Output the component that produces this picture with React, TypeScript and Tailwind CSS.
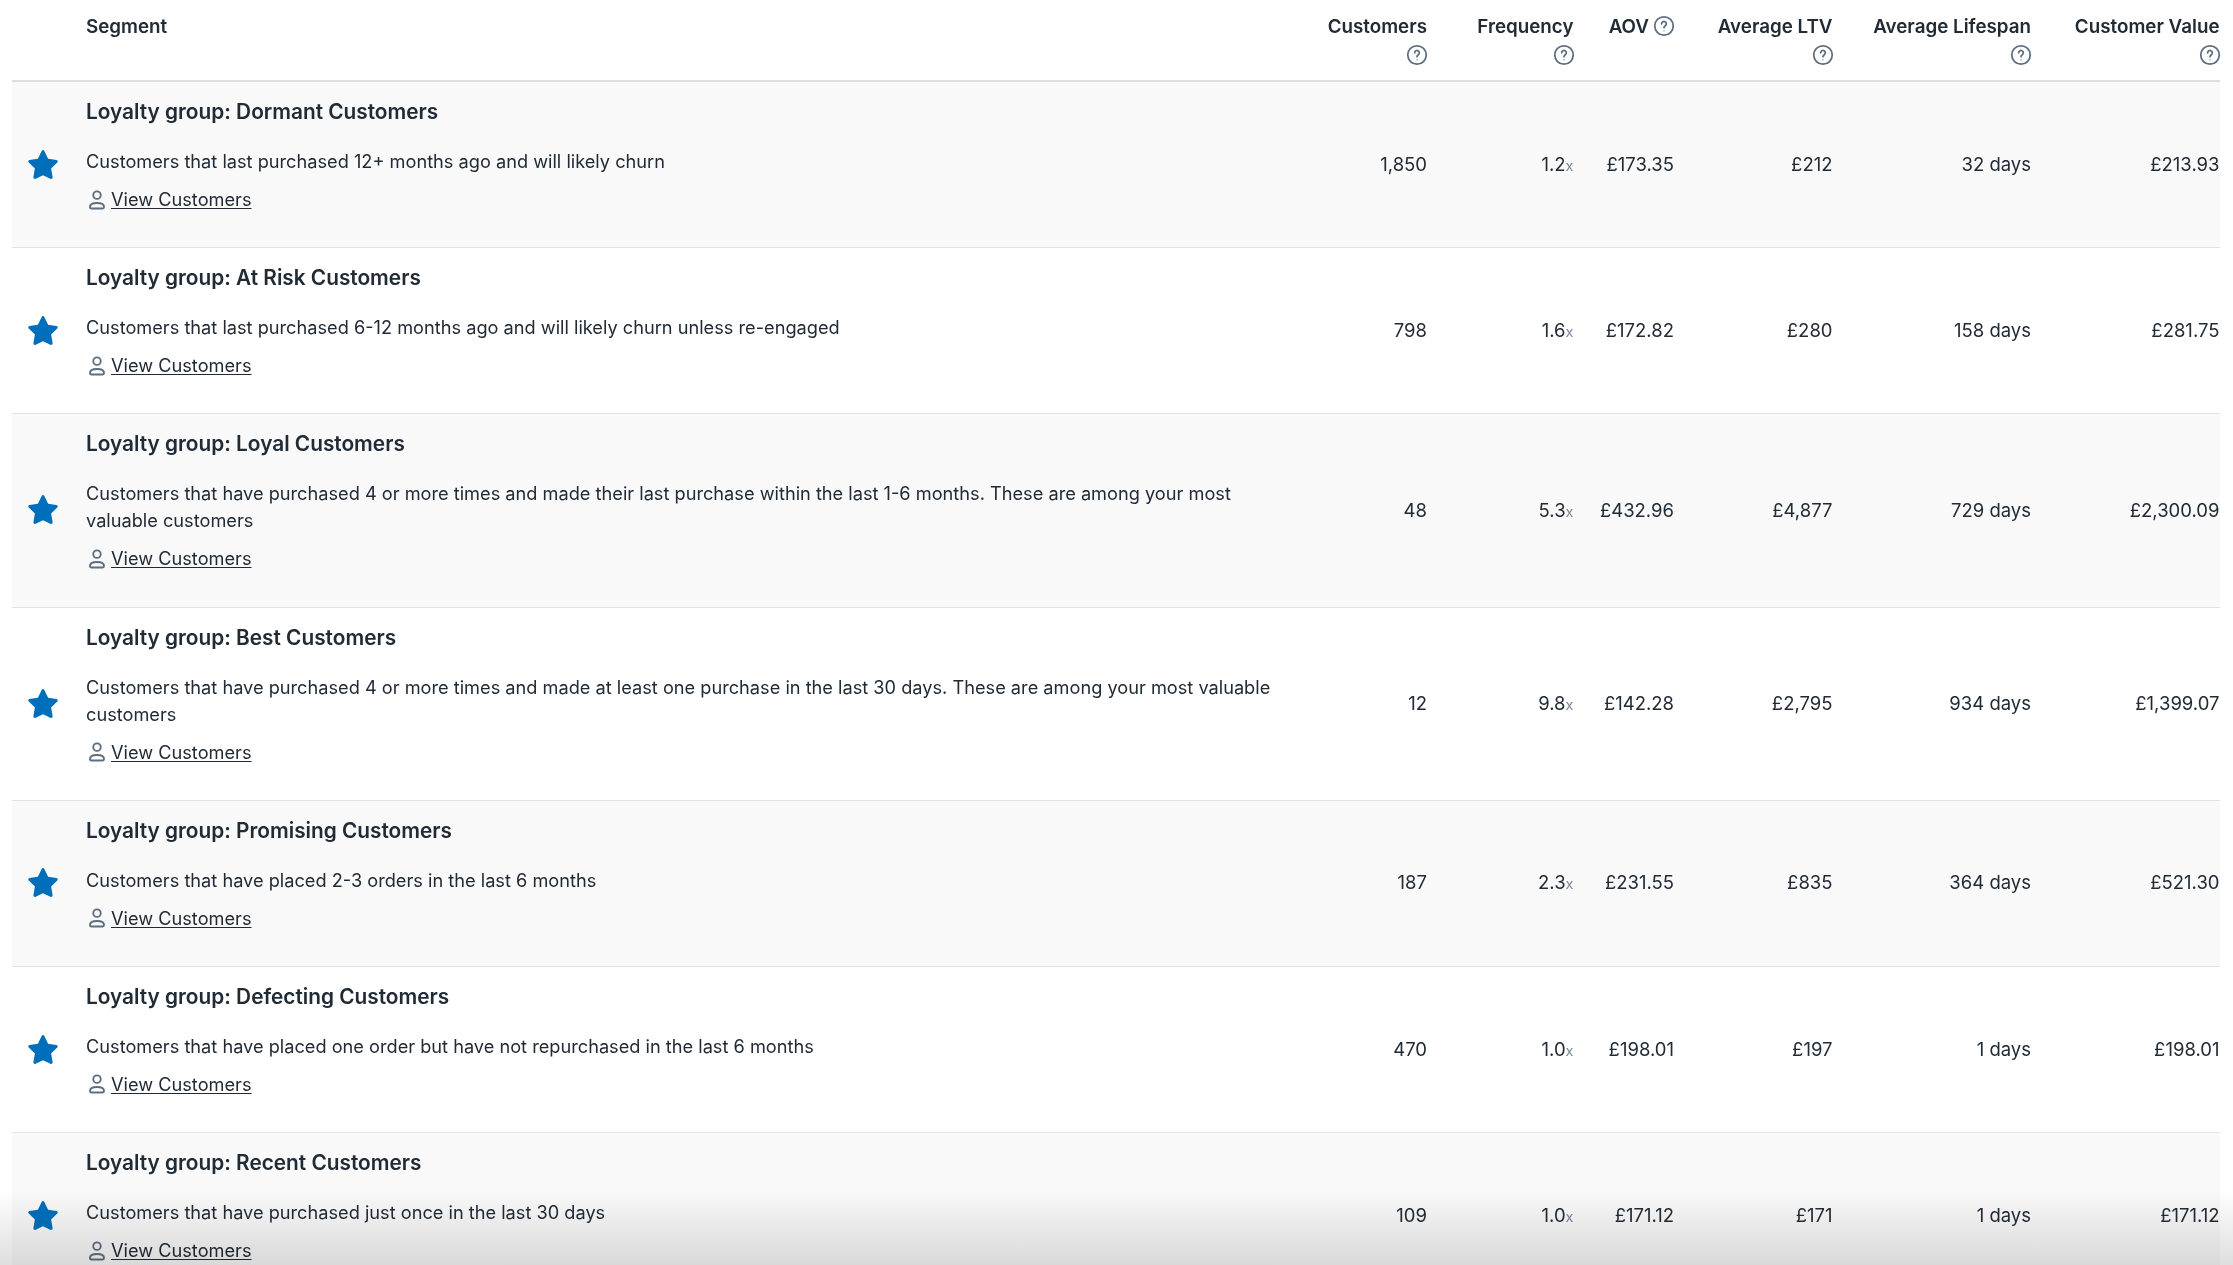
const rows = [
  { name: "Dormant Customers", desc: "Customers that last purchased 12+ months ago and will likely churn", customers: "1,850", freq: "1.2", aov: "£173.35", ltv: "£212", life: "32 days", value: "£213.93", tinted: true },
  { name: "At Risk Customers", desc: "Customers that last purchased 6-12 months ago and will likely churn unless re-engaged", customers: "798", freq: "1.6", aov: "£172.82", ltv: "£280", life: "158 days", value: "£281.75", tinted: false },
  { name: "Loyal Customers", desc: "Customers that have purchased 4 or more times and made their last purchase within the last 1-6 months. These are among your most valuable customers", customers: "48", freq: "5.3", aov: "£432.96", ltv: "£4,877", life: "729 days", value: "£2,300.09", tinted: true },
  { name: "Best Customers", desc: "Customers that have purchased 4 or more times and made at least one purchase in the last 30 days. These are among your most valuable customers", customers: "12", freq: "9.8", aov: "£142.28", ltv: "£2,795", life: "934 days", value: "£1,399.07", tinted: false },
  { name: "Promising Customers", desc: "Customers that have placed 2-3 orders in the last 6 months", customers: "187", freq: "2.3", aov: "£231.55", ltv: "£835", life: "364 days", value: "£521.30", tinted: true },
  { name: "Defecting Customers", desc: "Customers that have placed one order but have not repurchased in the last 6 months", customers: "470", freq: "1.0", aov: "£198.01", ltv: "£197", life: "1 days", value: "£198.01", tinted: false },
  { name: "Recent Customers", desc: "Customers that have purchased just once in the last 30 days", customers: "109", freq: "1.0", aov: "£171.12", ltv: "£171", life: "1 days", value: "£171.12", tinted: true },
];

const Help = () => (
  <svg viewBox="0 0 20 20" className="-mr-px inline-block h-[22px] w-[22px] text-[#5c6f82]" fill="none" stroke="currentColor" strokeWidth="1.6" strokeLinecap="round">
    <circle cx="10" cy="10" r="8.4" />
    <path d="M7.9 8a2.1 2.1 0 1 1 3.3 1.7c-.7.5-1.2.9-1.2 1.8" />
    <circle cx="10" cy="14.4" r=".6" fill="currentColor" stroke="none" />
  </svg>
);

const Star = () => (
  <svg viewBox="0 0 20 20" className="-mt-[2px] h-[30px] w-[30px] text-[#006fbb]" fill="currentColor">
    <path d="M10 .7c.4 0 .7.2.9.6l2.5 5.2 5.6.8c.8.1 1.1 1.1.5 1.7l-4.1 4 1 5.7c.1.9-.8 1.5-1.5 1.1L10 17.5l-4.9 2.3c-.7.4-1.6-.2-1.5-1.1l1-5.7-4.1-4c-.6-.6-.3-1.6.5-1.7l5.6-.8 2.5-5.2c.2-.4.5-.6.9-.6z" />
  </svg>
);

const Person = () => (
  <svg viewBox="0 0 20 20" className="h-[22px] w-[22px] shrink-0 text-[#5c6f82]" fill="none" stroke="currentColor" strokeWidth="1.7">
    <circle cx="10" cy="5.6" r="3.4" />
    <path d="M3.6 16.4c0-2.4 2.6-3.7 6.4-3.7s6.4 1.3 6.4 3.7c0 .9-.5 1.3-1.3 1.3H4.9c-.8 0-1.3-.4-1.3-1.3z" />
  </svg>
);

const cols = "grid grid-cols-[62px_1fr_147px_146.5px_100.5px_158.5px_198.5px_188.5px]";

export default function App() {
  return (
    <div className="relative h-[1265px] w-[2233px] overflow-hidden bg-white pl-3 pr-[13.5px] font-['Inter',sans-serif] text-[18.5px] text-[#212b36]">
      <div className={`${cols} h-[82px] border-b-2 border-b-[#dfdfdf] pt-[15px] text-[18.8px] font-semibold leading-[24px]`}>
        <div />
        <div className="pl-[12px]">Segment</div>
        <div className="flex flex-col items-end gap-[5px]">Customers<Help /></div>
        <div className="flex flex-col items-end gap-[5px]">Frequency<Help /></div>
        <div className="flex items-start justify-end gap-[4px]">AOV<Help /></div>
        <div className="flex flex-col items-end gap-[5px]">Average LTV<Help /></div>
        <div className="flex flex-col items-end gap-[5px]">Average Lifespan<Help /></div>
        <div className="flex flex-col items-end gap-[5px] text-nowrap">Customer Value<Help /></div>
      </div>
      {rows.map((r) => (
        <div key={r.name} className={`${cols} items-center border-b border-b-[#e3e3e3] ${r.tinted ? "bg-[#f9f9f9]" : "bg-white"}`}>
          <div className="flex justify-center pr-[1px]"><Star /></div>
          <div className="pt-[16px] pb-[34.2px] pl-[12px] text-[18.2px] leading-[27px]">
            <div className="text-[20.8px] font-semibold leading-[28px]">Loyalty group: {r.name}</div>
            <div className="mt-[22px]">{r.desc}</div>
            <div className="mt-[11px] flex items-center gap-[3px]">
              <Person />
              <a className="underline underline-offset-2">View Customers</a>
            </div>
          </div>
          <div className="text-right">{r.customers}</div>
          <div className="text-right">{r.freq}<span className="text-[14.5px] text-[#7b8a99]">x</span></div>
          <div className="text-right">{r.aov}</div>
          <div className="text-right">{r.ltv}</div>
          <div className="text-right">{r.life}</div>
          <div className="text-right">{r.value}</div>
        </div>
      ))}
      {/* multiply so the text and stars stay dark under the fade */}
      <div className="pointer-events-none absolute inset-x-0 bottom-0 h-[75px] bg-gradient-to-b from-white to-[#dfdfdf] mix-blend-multiply" />
    </div>
  );
}
